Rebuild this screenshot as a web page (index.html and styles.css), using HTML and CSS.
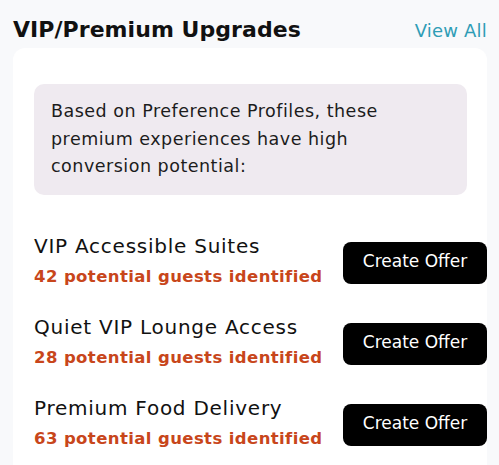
FILE: index.html
```html
<!DOCTYPE html>
<html lang="en">
<head>
<meta charset="utf-8">
<title>VIP/Premium Upgrades</title>
<link rel="stylesheet" href="styles.css">
</head>
<body>
<div class="page">
  <div class="header">
    <h2 class="title">VIP/Premium Upgrades</h2>
    <a class="view-all" href="#">View All</a>
  </div>
  <div class="card">
    <div class="info">Based on Preference Profiles, these premium experiences have high conversion potential:</div>
    <div class="list">
      <div class="row">
        <div class="text">
          <div class="name">VIP Accessible Suites</div>
          <div class="count">42 potential guests identified</div>
        </div>
        <button class="btn">Create Offer</button>
      </div>
      <div class="row">
        <div class="text">
          <div class="name">Quiet VIP Lounge Access</div>
          <div class="count">28 potential guests identified</div>
        </div>
        <button class="btn">Create Offer</button>
      </div>
      <div class="row">
        <div class="text">
          <div class="name">Premium Food Delivery</div>
          <div class="count">63 potential guests identified</div>
        </div>
        <button class="btn">Create Offer</button>
      </div>
    </div>
  </div>
</div>
</body>
</html>
```
FILE: styles.css
```css
html, body {
  margin: 0;
  padding: 0;
  background: #f8f9fb;
  font-family: "DejaVu Sans", "Open Sans", sans-serif;
  color: #111;
}
.page {
  padding: 17px 12px 0 13px;
}
.header {
  display: flex;
  justify-content: space-between;
  align-items: baseline;
}
.title {
  margin: 0;
  font-size: 22px;
  line-height: 26px;
  font-weight: 700;
  color: #111;
  letter-spacing: 0.05px;
}
.view-all {
  font-size: 18px;
  line-height: 26px;
  color: #2f9db6;
  text-decoration: none;
  letter-spacing: 0.2px;
}
.card {
  margin-top: 4px;
  background: #fff;
  border-radius: 12px 12px 0 0;
  padding: 36px 0 17px 21px;
}
.info {
  margin-right: 20px;
  background: #efeaf0;
  border-radius: 10px;
  padding: 14px 30px 14px 17px;
  font-size: 17.5px;
  line-height: 27.5px;
  letter-spacing: 0.5px;
  color: #1c1c1c;
}
.list {
  margin-top: 39px;
  display: flex;
  flex-direction: column;
  gap: 28px;
}
.row {
  display: flex;
  justify-content: space-between;
  align-items: flex-start;
}
.name {
  font-size: 20px;
  line-height: 24px;
  letter-spacing: 0.75px;
  color: #111;
}
.count {
  margin-top: 9px;
  font-size: 16.5px;
  line-height: 20px;
  font-weight: 700;
  letter-spacing: 0.4px;
  color: #c8461b;
}
.btn {
  margin-top: 8px;
  width: 144px;
  height: 42px;
  padding: 0 0 4px;
  border: none;
  border-radius: 8px;
  background: #000;
  color: #fff;
  font-family: inherit;
  font-size: 17px;
  line-height: 38px;
  text-align: center;
  cursor: pointer;
}
```
